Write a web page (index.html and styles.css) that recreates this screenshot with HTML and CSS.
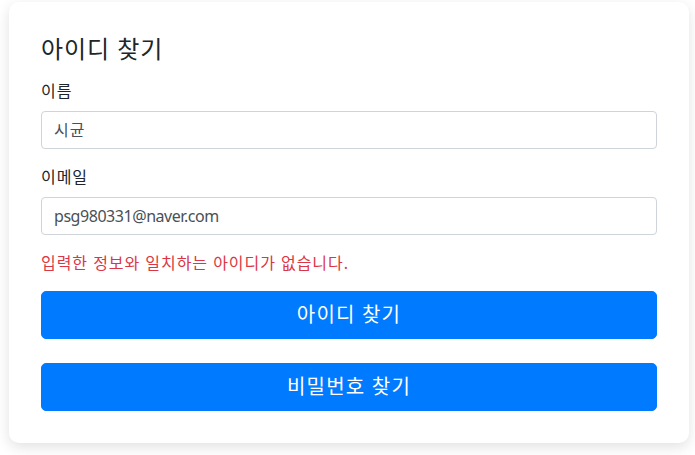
FILE: index.html
```html
<!DOCTYPE html>
<html lang="ko">
<head>
<meta charset="utf-8">
<title>아이디 찾기</title>
<link rel="stylesheet" href="styles.css">
</head>
<body>
<div class="page">
  <div class="card">
    <h2 class="title">아이디 찾기</h2>
    <div class="form-group">
      <label class="label">이름</label>
      <div class="input">시균</div>
    </div>
    <div class="form-group">
      <label class="label">이메일</label>
      <div class="input input-latin">psg980331@naver.com</div>
    </div>
    <p class="error">입력한 정보와 일치하는 아이디가 없습니다.</p>
    <button class="btn">아이디 찾기</button>
    <button class="btn btn-second">비밀번호 찾기</button>
  </div>
</div>
</body>
</html>
```
FILE: styles.css
```css
* { box-sizing: border-box; }
html, body { margin: 0; padding: 0; background: #ffffff; }
body {
  font-family: "Noto Sans", "Noto Sans CJK KR", sans-serif;
  font-size: 16px;
  line-height: 1.5;
  color: #212529;
}
.page {
  padding: 2px 6px 12px 9px;
}
.card {
  width: 680px;
  background: #fff;
  border-radius: 10px;
  padding: 32px 32px 32px 32px;
  box-shadow: 0 4px 14px rgba(0, 0, 0, 0.12);
  display: flex;
  flex-direction: column;
  letter-spacing: 0.06em;
}
.title {
  margin: 0 0 16px 0;
  font-size: 24px;
  font-weight: 400;
  line-height: 1.2;
  height: 29px;
  padding-top: 1px;
}
.form-group {
  display: flex;
  flex-direction: column;
  margin-bottom: 16px;
}
.label {
  display: block;
  margin-bottom: 8px;
  height: 24px;
}
.input {
  height: 38px;
  border: 1px solid #ced4da;
  border-radius: 4px;
  padding: 6px 12px;
  color: #495057;
  font-size: 16px;
  line-height: 24px;
  background: #fff;
}
.input-latin {
  letter-spacing: -0.45px;
}
.error {
  margin: 0 0 16px 0;
  color: #dc3545;
  height: 24px;
}
.btn {
  display: block;
  width: 100%;
  height: 48px;
  border: 1px solid #007bff;
  background: #007bff;
  color: #fff;
  font-family: inherit;
  font-size: 20px;
  line-height: 30px;
  letter-spacing: 0.06em;
  padding: 8px 16px;
  border-radius: 5px;
  cursor: pointer;
}
.btn-second {
  margin-top: 24px;
}
```
